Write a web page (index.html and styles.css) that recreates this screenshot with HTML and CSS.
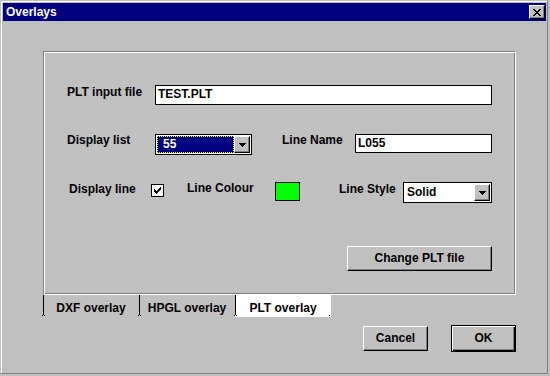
FILE: index.html
```html
<!DOCTYPE html>
<html>
<head>
<meta charset="utf-8">
<link rel="stylesheet" href="styles.css">
</head>
<body>
<div class="window">
  <div class="titlebar">
    <span class="title">Overlays</span>
    <div class="close">
      <svg width="8" height="7" viewBox="0 0 8 7" shape-rendering="crispEdges"><path d="M0 0h2v1h-2zM6 0h2v1h-2zM1 1h2v1h-2zM5 1h2v1h-2zM2 2h4v1h-4zM3 3h2v1h-2zM2 4h4v1h-4zM1 5h2v1h-2zM5 5h2v1h-2zM0 6h2v1h-2zM6 6h2v1h-2z" fill="#000"/></svg>
    </div>
  </div>

  <div class="panel">
    <div class="row row1">
      <span class="label lbl-file">PLT input file</span>
      <div class="input input-file">TEST.PLT</div>
    </div>
    <div class="row row2">
      <span class="label lbl-list">Display list</span>
      <div class="combo combo-list">
        <div class="sel">55</div>
        <div class="dropbtn"><svg width="7" height="4" viewBox="0 0 7 4" shape-rendering="crispEdges"><path d="M0 0h7v1h-7zM1 1h5v1h-5zM2 2h3v1h-3zM3 3h1v1h-1z" fill="#000"/></svg></div>
      </div>
      <span class="label lbl-name">Line Name</span>
      <div class="input input-name">L055</div>
    </div>
    <div class="row row3">
      <span class="label lbl-line">Display line</span>
      <div class="check"><svg width="7" height="7" viewBox="0 0 7 7" shape-rendering="crispEdges"><path d="M6 0h1v1h-1zM5 1h2v1h-2zM0 2h1v1h-1zM4 2h3v1h-3zM0 3h2v1h-2zM3 3h3v1h-3zM0 4h5v1h-5zM1 5h3v1h-3zM2 6h1v1h-1z" fill="#000"/></svg></div>
      <span class="label lbl-colour">Line Colour</span>
      <div class="swatch"></div>
      <span class="label lbl-style">Line Style</span>
      <div class="combo combo-style">
        <div class="val">Solid</div>
        <div class="dropbtn"><svg width="7" height="4" viewBox="0 0 7 4" shape-rendering="crispEdges"><path d="M0 0h7v1h-7zM1 1h5v1h-5zM2 2h3v1h-3zM3 3h1v1h-1z" fill="#000"/></svg></div>
      </div>
    </div>
    <div class="row row4">
      <div class="btn btn-change">Change PLT file</div>
    </div>
  </div>

  <div class="tabs">
    <div class="tab">DXF overlay</div>
    <div class="tab">HPGL overlay</div>
    <div class="tab active">PLT overlay</div>
    <div class="tab-end"></div>
  </div>

  <div class="actions">
    <div class="btn btn-cancel">Cancel</div>
    <div class="btn btn-ok">OK</div>
  </div>
</div>
</body>
</html>
```

FILE: styles.css
```css
* {
  box-sizing: border-box;
}

body {
  margin: 0;
  background: #c0c0c0;
  font-family: "Liberation Sans", Arial, sans-serif;
  font-weight: bold;
  font-size: 12px;
  color: #000;
}

.window {
  width: 548px;
  height: 374px;
  border: 1px solid;
  border-color: #c0c0c0 #808080 #808080 #c0c0c0;
  box-shadow: inset 1px 1px #fff;
  padding: 2px 1px 0 2px;
}

.titlebar {
  height: 18px;
  background: #000080;
  color: #fff;
  display: flex;
  align-items: center;
  justify-content: space-between;
  padding-left: 3px;
}

.title {
  font-size: 12px;
  line-height: 14px;
}

.close {
  width: 16px;
  height: 14px;
  margin-right: 1px;
  background: #c0c0c0;
  border: 1px solid;
  border-color: #fff #000 #000 #fff;
  box-shadow: inset -1px -1px #808080;
  display: flex;
  align-items: center;
  justify-content: center;
}

.close svg,
.dropbtn svg,
.check svg {
  display: block;
}

.panel {
  margin: 30px 0 0 40px;
  width: 473px;
  height: 244px;
  border: 1px solid;
  border-color: #808080 #fff #fff #808080;
  box-shadow: inset 1px 1px #fff, inset -1px -1px #808080;
  padding: 33px 0 0 23px;
}

.row {
  display: flex;
  align-items: flex-start;
}

.row2 {
  margin-top: 29px;
}

.row3 {
  margin-top: 27px;
}

.row4 {
  margin-top: 43px;
}

.label {
  line-height: 12px;
  white-space: nowrap;
}

.lbl-file {
  width: 88px;
  margin-top: 1px;
}

.lbl-list {
  width: 88px;
}

.lbl-name {
  width: 73px;
  margin-left: 30px;
}

.lbl-line {
  width: 82px;
  margin-left: 2px;
  margin-top: 1px;
}

.lbl-colour {
  width: 88px;
  margin-left: 23px;
}

.lbl-style {
  width: 64px;
  margin-left: 39px;
  margin-top: 1px;
}

.input {
  border: 1px solid #000;
  background: #fff;
  padding: 1px 0 0 2px;
  line-height: 14px;
}

.input-file {
  width: 337px;
  height: 20px;
}

.input-name {
  width: 137px;
  height: 19px;
}

.combo {
  height: 21px;
  border: 1px solid #000;
  background: #fff;
  padding: 1px;
  display: flex;
}

.combo-list {
  width: 97px;
}

.combo-style {
  width: 89px;
}

.sel {
  flex: 1;
  height: 17px;
  background: #000080;
  color: #fff;
  border: 1px dotted #ffff00;
  padding-left: 5px;
  line-height: 14px;
}

.val {
  flex: 1;
  height: 17px;
  padding-left: 2px;
  line-height: 17px;
}

.dropbtn {
  width: 16px;
  height: 17px;
  background: #c0c0c0;
  border: 1px solid;
  border-color: #fff #000 #000 #fff;
  box-shadow: inset -1px -1px #808080;
  display: flex;
  align-items: center;
  justify-content: center;
}

.check {
  width: 13px;
  height: 13px;
  margin-top: 2px;
  border: 1px solid #000;
  background: #fff;
  padding: 2px 0 0 2px;
}

.swatch {
  width: 25px;
  height: 19px;
  border: 1px solid #000;
  background: #00ff00;
}

.btn {
  display: flex;
  align-items: center;
  justify-content: center;
  background: #c0c0c0;
  border: 1px solid;
  border-color: #fff #000 #000 #fff;
  box-shadow: inset -1px -1px #808080;
  line-height: 14px;
  padding-bottom: 2px;
  white-space: nowrap;
}

.btn-change {
  width: 145px;
  height: 25px;
  margin-left: 280px;
}

.tabs {
  display: flex;
  margin-left: 40px;
  height: 22px;
}

.tab {
  position: relative;
  width: 96px;
  height: 22px;
  padding-top: 6px;
  line-height: 14px;
  text-align: center;
  background: linear-gradient(#000, #000) 0 0 / 1px 20px no-repeat;
}

.tab.active {
  background: linear-gradient(#000, #000) 0 0 / 1px 20px no-repeat, #fff;
}

.tab::before,
.tab::after,
.tab-end::before {
  content: "";
  position: absolute;
  bottom: 1px;
  width: 1px;
  height: 1px;
  background: #000;
}

.tab::before {
  left: -1px;
}

.tab::after {
  left: 1px;
}

.tab-end {
  position: relative;
  width: 0;
  height: 22px;
}

.tab-end::before {
  left: -2px;
}

.actions {
  display: flex;
  align-items: flex-start;
  justify-content: flex-end;
  gap: 23px;
  margin-top: 8px;
  padding-right: 30px;
}

.btn-cancel {
  width: 65px;
  height: 25px;
  margin-top: 1px;
}

.btn-ok {
  width: 65px;
  height: 27px;
  border-color: #000;
  box-shadow: inset 1px 1px #fff, inset -1px -1px #000, inset -2px -2px #808080;
}
```
